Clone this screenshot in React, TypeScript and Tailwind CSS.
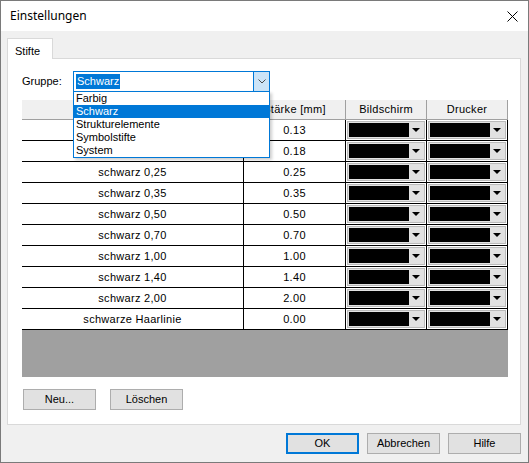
import React from 'react'

const rows = [
  ['schwarz 0,13', '0.13'],
  ['schwarz 0,18', '0.18'],
  ['schwarz 0,25', '0.25'],
  ['schwarz 0,35', '0.35'],
  ['schwarz 0,50', '0.50'],
  ['schwarz 0,70', '0.70'],
  ['schwarz 1,00', '1.00'],
  ['schwarz 1,40', '1.40'],
  ['schwarz 2,00', '2.00'],
  ['schwarze Haarlinie', '0.00'],
]

const groups = ['Farbig', 'Schwarz', 'Strukturelemente', 'Symbolstifte', 'System']

function ColorCombo() {
  return (
    <div className="flex h-full border border-[#b9b9b9] bg-[#e1e1e1] p-px">
      <div className="flex-1 bg-black" />
      <div className="flex w-[14px] items-center justify-center">
        <div className="h-0 w-0 border-x-[4px] border-t-[4px] border-x-transparent border-t-black" />
      </div>
    </div>
  )
}

function Btn({ label, primary }: { label: string; primary?: boolean }) {
  return (
    <button
      className={
        primary
          ? 'flex h-[21px] w-[73px] items-center justify-center border-2 border-[#0078d7] bg-[#e1e1e1] text-black'
          : 'flex h-[21px] w-[73px] items-center justify-center border border-[#adadad] bg-[#e1e1e1] text-black'
      }
    >
      {label}
    </button>
  )
}

export default function App() {
  return (
    <div className="flex h-[463px] w-[529px] flex-col border border-[#7a7a7a] bg-[#f0f0f0] font-['Liberation_Sans',Arial,sans-serif] text-[11px] text-black">
      {/* Title bar */}
      <div className="flex h-[30px] shrink-0 items-center justify-between bg-white pl-[9px] pr-[10px]">
        <span className="font-['Segoe_UI','Noto_Sans',sans-serif] text-[12px]">Einstellungen</span>
        <svg width="11" height="11" viewBox="0 0 11 11" className="mt-[1px]">
          <path d="M0.5 0.5L10.5 10.5M10.5 0.5L0.5 10.5" stroke="#000" strokeWidth="1" />
        </svg>
      </div>

      {/* Body */}
      <div className="flex flex-1 flex-col px-[6px] pt-[7px]">
        <div className="flex">
          <div className="relative z-10 -mb-px flex h-[21px] w-[46px] items-start border border-b-0 border-[#d9d9d9] bg-white pl-[7px] pt-[4px]">
            Stifte
          </div>
        </div>
        <div className="flex h-[367px] w-[514px] flex-col border border-[#d9d9d9] bg-white pl-[14px] pt-[12px]">
          {/* Gruppe */}
          <div className="flex h-[21px] items-center">
            <span className="w-[51px]">Gruppe:</span>
            <div className="relative z-20 flex h-[21px] w-[197px] border border-[#0078d7] bg-white">
              <div className="flex flex-1 items-center pl-[2px]">
                <span className="bg-[#0078d7] px-px leading-[15px] text-white">Schwarz</span>
              </div>
              <div className="flex w-[16px] items-center justify-center border-l border-[#0078d7] bg-[#cce4f7]">
                <svg width="8" height="5" viewBox="0 0 8 5">
                  <path d="M0.5 0.5L4 4L7.5 0.5" fill="none" stroke="#4a4a4a" strokeWidth="1" />
                </svg>
              </div>
              <div className="absolute left-[-1px] top-full w-[197px] border border-[#0078d7] bg-white shadow-[2px_2px_3px_rgba(0,0,0,0.2)]">
                {groups.map(g => (
                  <div
                    key={g}
                    className={
                      g === 'Schwarz'
                        ? 'h-[13px] bg-[#0078d7] pl-[2px] leading-[13px] text-white'
                        : 'h-[13px] pl-[2px] leading-[13px]'
                    }
                  >
                    {g}
                  </div>
                ))}
              </div>
            </div>
          </div>

          {/* Table */}
          <div className="mt-[8px] flex w-[486px] flex-col tracking-[0.3px]">
            <div className="flex h-[20px] border-b border-[#a0a0a0] bg-[#f0f0f0]">
              <div className="w-[222px] border-r border-[#a0a0a0]" />
              <div className="flex w-[102px] items-center justify-center border-r border-[#a0a0a0]">Stärke [mm]</div>
              <div className="flex w-[81px] items-center justify-center border-r border-[#a0a0a0]">Bildschirm</div>
              <div className="flex w-[81px] items-center justify-center border-r border-[#a0a0a0]">Drucker</div>
            </div>
            {rows.map(([name, v]) => (
              <div key={name} className="flex h-[21px] border-b border-black">
                <div className="flex w-[222px] items-center justify-center border-r border-black">{name}</div>
                <div className="flex w-[102px] items-center justify-center border-r border-black">{v}</div>
                <div className="w-[81px] border-r border-black p-px">
                  <ColorCombo />
                </div>
                <div className="w-[81px] border-r border-black p-px">
                  <ColorCombo />
                </div>
              </div>
            ))}
            <div className="h-[47px] bg-[#a0a0a0]" />
          </div>

          <div className="mt-[12px] flex gap-[14px] pl-px">
            <Btn label="Neu..." />
            <Btn label="Löschen" />
          </div>
        </div>

        <div className="mt-[8px] flex justify-end gap-[8px] pr-px">
          <Btn label="OK" primary />
          <Btn label="Abbrechen" />
          <Btn label="Hilfe" />
        </div>
      </div>
    </div>
  )
}
